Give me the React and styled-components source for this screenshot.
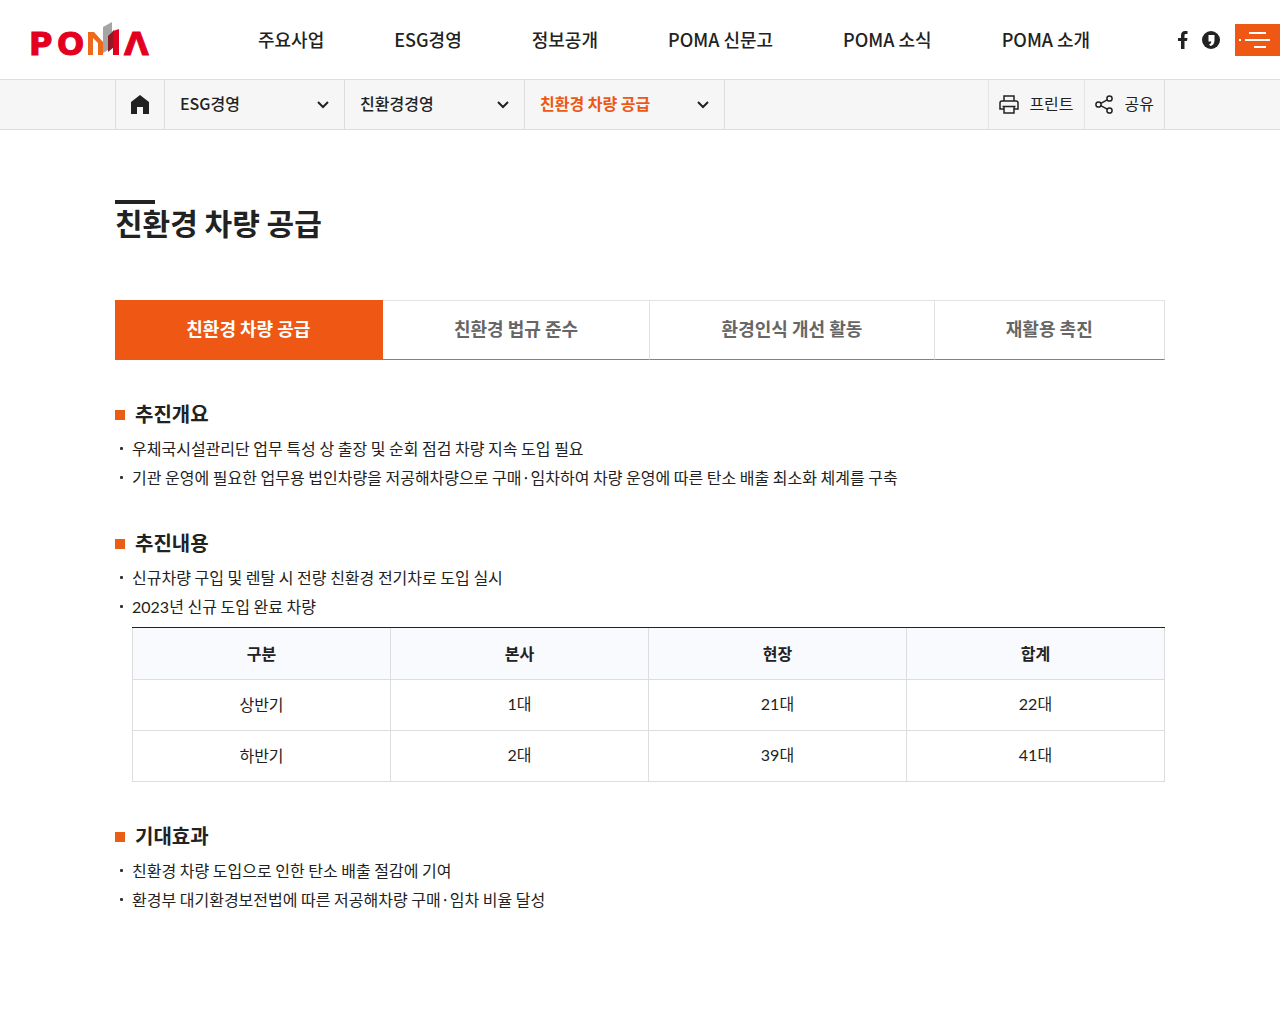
import React from "react";
import styled, { createGlobalStyle } from "styled-components";

const Global = createGlobalStyle`
  *, *::before, *::after { box-sizing: border-box; }
  body {
    margin: 0;
    background: #fff;
    color: #222;
    font-family: "Noto Sans CJK KR", "Noto Sans", sans-serif;
    font-size: 16px;
    line-height: 24px;
  }
  h1, h2, ul { margin: 0; padding: 0; }
  ul { list-style: none; }
  a { color: inherit; text-decoration: none; }
  button { font: inherit; color: inherit; background: none; border: 0; padding: 0; cursor: pointer; }
  svg { display: block; }
`;

const Header = styled.header`
  display: flex;
  align-items: center;
  height: 80px;
  padding-left: 24px;
  border-bottom: 1px solid #ddd;
`;

const MainNav = styled.nav`
  flex: 1;
  margin-left: 107px;
  ul { display: flex; gap: 70px; }
  a { font-size: 18px; font-weight: 500; white-space: nowrap; }
`;

const Social = styled.div`
  display: flex;
  align-items: center;
  gap: 14px;
  margin-right: 15px;
`;

const MenuButton = styled.button`
  width: 45px;
  height: 32px;
  background: #ee5814;
`;

const LocationBar = styled.div`
  background: #f6f6f6;
  border-bottom: 1px solid #ddd;
`;

const Container = styled.div`
  width: 100%;
  max-width: 1050px;
  margin: 0 auto;
`;

const LocationInner = styled(Container)`
  display: flex;
  height: 49px;
  border: solid #ddd;
  border-width: 0 1px;
`;

const HomeLink = styled.a`
  display: flex;
  align-items: center;
  justify-content: center;
  width: 49px;
  border-right: 1px solid #ddd;
`;

const Crumb = styled.button`
  display: flex;
  align-items: center;
  justify-content: space-between;
  width: ${(p) => (p.$current ? 200 : 180)}px;
  padding: 0 14px 3px 15px;
  border-right: 1px solid #ddd;
  font-weight: ${(p) => (p.$current ? 700 : 500)};
  color: ${(p) => (p.$current ? "#ee5814" : "#222")};
  svg { margin-top: 2px; color: #222; }
`;

const Tools = styled.div`
  display: flex;
  margin-left: auto;
`;

const Tool = styled.button`
  display: flex;
  align-items: center;
  gap: 10px;
  padding: 0 10px 3px;
  border-left: 1px solid #e4e4e4;
  svg { margin-top: 2px; }
`;

const Main = styled(Container).attrs({ as: "main" })`
  padding: 70px 0 100px;
`;

const Title = styled.h1`
  margin-bottom: 59px;
  font-size: 30px;
  line-height: 37px;
  font-weight: 700;
  &::before {
    content: "";
    display: block;
    width: 40px;
    height: 4px;
    background: #222;
  }
`;

const Tabs = styled.nav`
  display: flex;
  margin-bottom: 39px;
`;

const Tab = styled.a`
  flex: 1 1 auto;
  height: 60px;
  border: 1px solid #e2e2e2;
  border-left: 0;
  border-bottom-color: #c0703c;
  color: #666;
  font-size: 18px;
  font-weight: 700;
  line-height: 55px;
  text-align: center;
  &[aria-current] {
    border-color: #ee5814;
    background: #ee5814;
    color: #fff;
  }
`;

const Section = styled.section`
  margin-bottom: 39px;
`;

const Heading = styled.h2`
  display: flex;
  align-items: center;
  gap: 10px;
  margin-bottom: 7px;
  font-size: 20px;
  line-height: 30px;
  font-weight: 700;
  &::before {
    content: "";
    width: 10px;
    height: 10px;
    margin-top: 2px;
    background: #e95d15;
  }
`;

const Bullets = styled.ul`
  display: grid;
  gap: 5px;
  li { display: flex; padding-left: 5px; }
  li::before {
    content: "";
    flex: none;
    width: 3px;
    height: 3px;
    margin: 11px 9px 0 0;
    border-radius: 1px;
    background: #333;
  }
`;

const Num = styled.span`
  font-family: Lato, "Noto Sans", sans-serif;
`;

const TableWrap = styled.div`
  margin: 8px 0 0 17px;
  border-top: 1px solid #222;
`;

const Table = styled.table`
  width: 100%;
  border-collapse: collapse;
  table-layout: fixed;
  th, td {
    height: 51px;
    padding: 0 0 2px;
    border: 1px solid #ddd;
    text-align: center;
    font-weight: 400;
  }
  thead th {
    padding: 0;
    border-top: 0;
    background: #f8fafe;
    font-weight: 700;
  }
`;

function Logo() {
  return (
    <svg width="127" height="60" viewBox="-6 -11 127 60" role="img" aria-label="POMA">
      <g fill="#e3001f" stroke="#e3001f" strokeWidth="1" fontFamily="DejaVu Sans" fontWeight="700" fontSize="32">
        <text x="-1" y="34">P</text>
        <text x="27" y="34">O</text>
        <text x="94" y="34">Λ</text>
      </g>
      <path fill="#ee6a1a" d="M58 11h6l9 10v13h-5V22l-5-5v17h-5z" />
      <path fill="#a3a5a7" d="M73 6l9-5v10l-4 5v13l-5 3z" />
      <path fill="#8f1a22" d="M78 15l6-6v17l-6 5z" />
      <path fill="#e3001f" d="M83 10l6-2v26h-6z" />
    </svg>
  );
}

const Chevron = () => (
  <svg width="14" height="14" viewBox="0 0 14 14" fill="none" stroke="currentColor" strokeWidth="2" aria-hidden="true">
    <path d="M2 5l5 5 5-5" />
  </svg>
);

const nav = ["주요사업", "ESG경영", "정보공개", "POMA 신문고", "POMA 소식", "POMA 소개"];
const crumbs = ["ESG경영", "친환경경영", "친환경 차량 공급"];
const tabs = ["친환경 차량 공급", "친환경 법규 준수", "환경인식 개선 활동", "재활용 촉진"];
const rows = [
  ["상반기", 1, 21, 22],
  ["하반기", 2, 39, 41],
];

export default function App() {
  return (
    <>
      <Global />
      <Header>
        <a href="#home"><Logo /></a>
        <MainNav aria-label="주메뉴">
          <ul>
            {nav.map((n) => <li key={n}><a href="#menu">{n}</a></li>)}
          </ul>
        </MainNav>
        <Social>
          <a href="#facebook" aria-label="페이스북">
            <svg width="10" height="18" viewBox="0 0 10 18" fill="#222">
              <path d="M3 18V10H0V7h3V4.500C3 1.500 4.500 0 7 0h2.500v3H8C6.800 3 6.500 3.500 6.500 4.500V7H9.500L9 10H6.500v8z" />
            </svg>
          </a>
          <a href="#story" aria-label="카카오스토리">
            <svg width="18" height="18" viewBox="0 0 18 18">
              <circle cx="9" cy="9" r="9" fill="#222" />
              <path fill="#fff" d="M6.500 4h6v5c0 3.500-1.500 5.500-4 6L7 13.500c1.500-.5 2.200-1.500 2.300-3H6.500z" />
            </svg>
          </a>
        </Social>
        <MenuButton aria-label="전체메뉴">
          <svg width="45" height="32" viewBox="0 0 45 32" stroke="#fff" strokeWidth="2">
            <path d="M14 9h17M10 16h25M19 23h12M4 16h2" />
          </svg>
        </MenuButton>
      </Header>
      <LocationBar>
        <LocationInner>
          <HomeLink href="#home" aria-label="홈">
            <svg width="18" height="19" viewBox="0 0 18 19" fill="#222">
              <path d="M9 0l9 7v12h-6v-7H6v7H0V7z" />
            </svg>
          </HomeLink>
          {crumbs.map((c, i) => (
            <Crumb key={c} $current={i === 2}>{c}<Chevron /></Crumb>
          ))}
          <Tools>
            <Tool>
              <svg width="20" height="20" viewBox="0 0 20 20" fill="none" stroke="#222" strokeWidth="1.500">
                <path d="M5 7V2h10v5M5 15H1V9c0-1.200.8-2 2-2h14c1.200 0 2 .8 2 2v6h-4M3.500 12.500h13M5 12.500V19h10v-6.500" />
              </svg>
              프린트
            </Tool>
            <Tool>
              <svg width="20" height="20" viewBox="0 0 20 20" fill="none" stroke="#222" strokeWidth="1.500">
                <circle cx="3.500" cy="10.500" r="2.600" /><circle cx="14.500" cy="4.500" r="2.600" /><circle cx="14.500" cy="16.500" r="2.600" />
                <path d="M5.800 9.300l6.400-3.500M5.800 11.700l6.400 3.500" />
              </svg>
              공유
            </Tool>
          </Tools>
        </LocationInner>
      </LocationBar>
      <Main>
        <Title>친환경 차량 공급</Title>
        <Tabs>
          {tabs.map((t, i) => (
            <Tab key={t} href="#tab" aria-current={i === 0 ? "page" : undefined}>{t}</Tab>
          ))}
        </Tabs>
        <Section>
          <Heading>추진개요</Heading>
          <Bullets>
            <li>우체국시설관리단 업무 특성 상 출장 및 순회 점검 차량 지속 도입 필요</li>
            <li>기관 운영에 필요한 업무용 법인차량을 저공해차량으로 구매·임차하여 차량 운영에 따른 탄소 배출 최소화 체계를 구축</li>
          </Bullets>
        </Section>
        <Section>
          <Heading>추진내용</Heading>
          <Bullets>
            <li>신규차량 구입 및 렌탈 시 전량 친환경 전기차로 도입 실시</li>
            <li><span><Num>2023</Num>년 신규 도입 완료 차량</span></li>
          </Bullets>
          <TableWrap>
            <Table>
              <thead>
                <tr>{["구분", "본사", "현장", "합계"].map((h) => <th key={h} scope="col">{h}</th>)}</tr>
              </thead>
              <tbody>
                {rows.map(([name, ...counts]) => (
                  <tr key={name}>
                    <th scope="row">{name}</th>
                    {counts.map((n) => <td key={n}><Num>{n}</Num>대</td>)}
                  </tr>
                ))}
              </tbody>
            </Table>
          </TableWrap>
        </Section>
        <Section>
          <Heading>기대효과</Heading>
          <Bullets>
            <li>친환경 차량 도입으로 인한 탄소 배출 절감에 기여</li>
            <li>환경부 대기환경보전법에 따른 저공해차량 구매·임차 비율 달성</li>
          </Bullets>
        </Section>
      </Main>
    </>
  );
}
